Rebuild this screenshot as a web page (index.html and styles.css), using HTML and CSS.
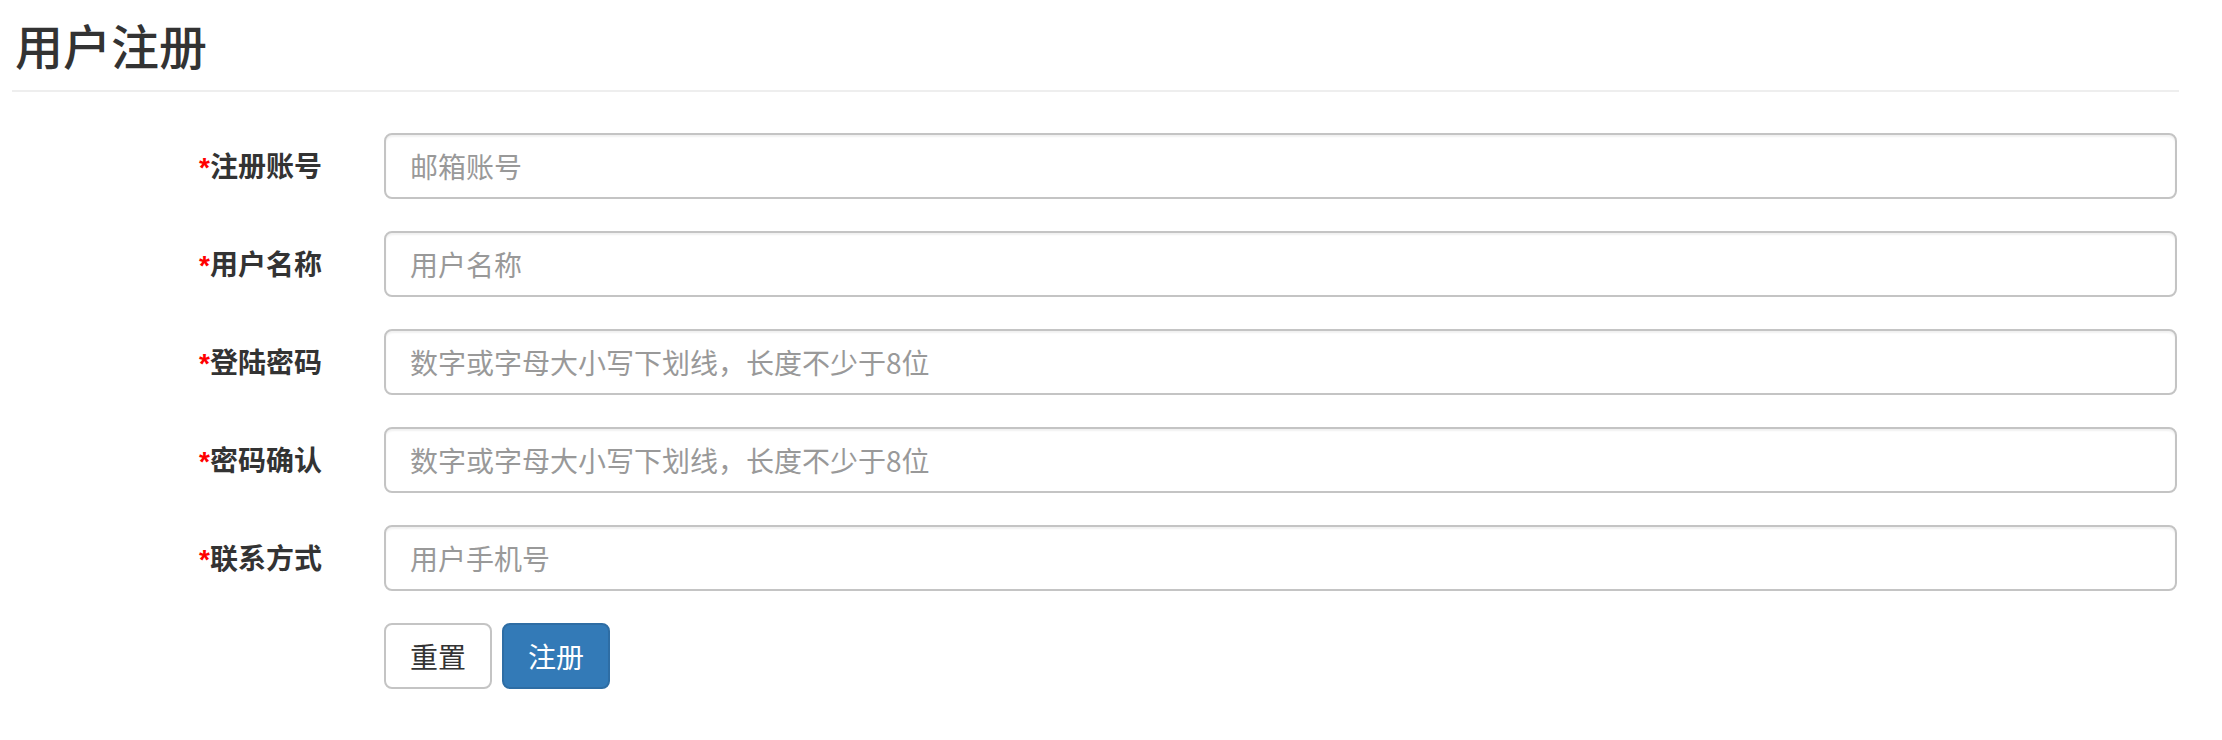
FILE: index.html
```html
<!DOCTYPE html>
<html lang="zh-CN">
<head>
<meta charset="utf-8">
<title>用户注册</title>
<link rel="stylesheet" href="styles.css">
</head>
<body>
<div class="page">
  <h3 class="title">用户注册</h3>
  <form class="form">
    <div class="row">
      <label class="label"><span class="req">*</span>注册账号</label>
      <input class="input" type="text" placeholder="邮箱账号">
    </div>
    <div class="row">
      <label class="label"><span class="req">*</span>用户名称</label>
      <input class="input" type="text" placeholder="用户名称">
    </div>
    <div class="row">
      <label class="label"><span class="req">*</span>登陆密码</label>
      <input class="input" type="password" placeholder="数字或字母大小写下划线，长度不少于8位">
    </div>
    <div class="row">
      <label class="label"><span class="req">*</span>密码确认</label>
      <input class="input" type="password" placeholder="数字或字母大小写下划线，长度不少于8位">
    </div>
    <div class="row">
      <label class="label"><span class="req">*</span>联系方式</label>
      <input class="input" type="text" placeholder="用户手机号">
    </div>
    <div class="row">
      <div class="label"></div>
      <div class="actions">
        <button type="reset" class="btn btn-default">重置</button>
        <button type="button" class="btn btn-primary">注册</button>
      </div>
    </div>
  </form>
</div>
</body>
</html>
```
FILE: styles.css
```css
html, body {
  margin: 0;
  padding: 0;
  background: #fff;
}
body {
  font-family: "Noto Sans CJK SC", "Noto Sans", sans-serif;
  color: #333;
}
.page {
  padding: 0 43px 0 12px;
}
.title {
  margin: 0;
  padding: 18px 0 20px 3px;
  font-size: 48px;
  line-height: 52px;
  font-weight: 500;
  color: #333;
  border-bottom: 2px solid #eee;
}
.form {
  margin-top: 41px;
  display: flex;
  flex-direction: column;
  gap: 32px;
  padding-right: 2px;
}
.row {
  display: flex;
  align-items: center;
  gap: 62px;
}
.label {
  flex: 0 0 310px;
  text-align: right;
  font-size: 28px;
  font-weight: 700;
  line-height: 40px;
  color: #333;
}
.req {
  color: #f00;
  font-family: "Liberation Sans", Arial, sans-serif;
  font-weight: 700;
}
.input {
  flex: 1;
  box-sizing: border-box;
  height: 66px;
  margin: 0;
  padding: 0 24px;
  border: 2px solid #c4c4c4;
  border-radius: 8px;
  background: #fff;
  box-shadow: inset 0 2px 2px rgba(0,0,0,0.06);
  font-family: "Noto Sans CJK SC", "Noto Sans", sans-serif;
  font-size: 28px;
  color: #555;
  outline: none;
}
.input::placeholder {
  color: #999;
}
.actions {
  display: flex;
  gap: 10px;
}
.btn {
  box-sizing: border-box;
  height: 66px;
  margin: 0;
  padding: 0 24px;
  border: 2px solid;
  border-radius: 8px;
  font-family: "Noto Sans CJK SC", "Noto Sans", sans-serif;
  font-size: 28px;
  line-height: 1;
  cursor: pointer;
}
.btn-default {
  background: #fff;
  border-color: #c4c4c4;
  color: #333;
}
.btn-primary {
  background: #337ab7;
  border-color: #2e6da4;
  color: #fff;
}
```
